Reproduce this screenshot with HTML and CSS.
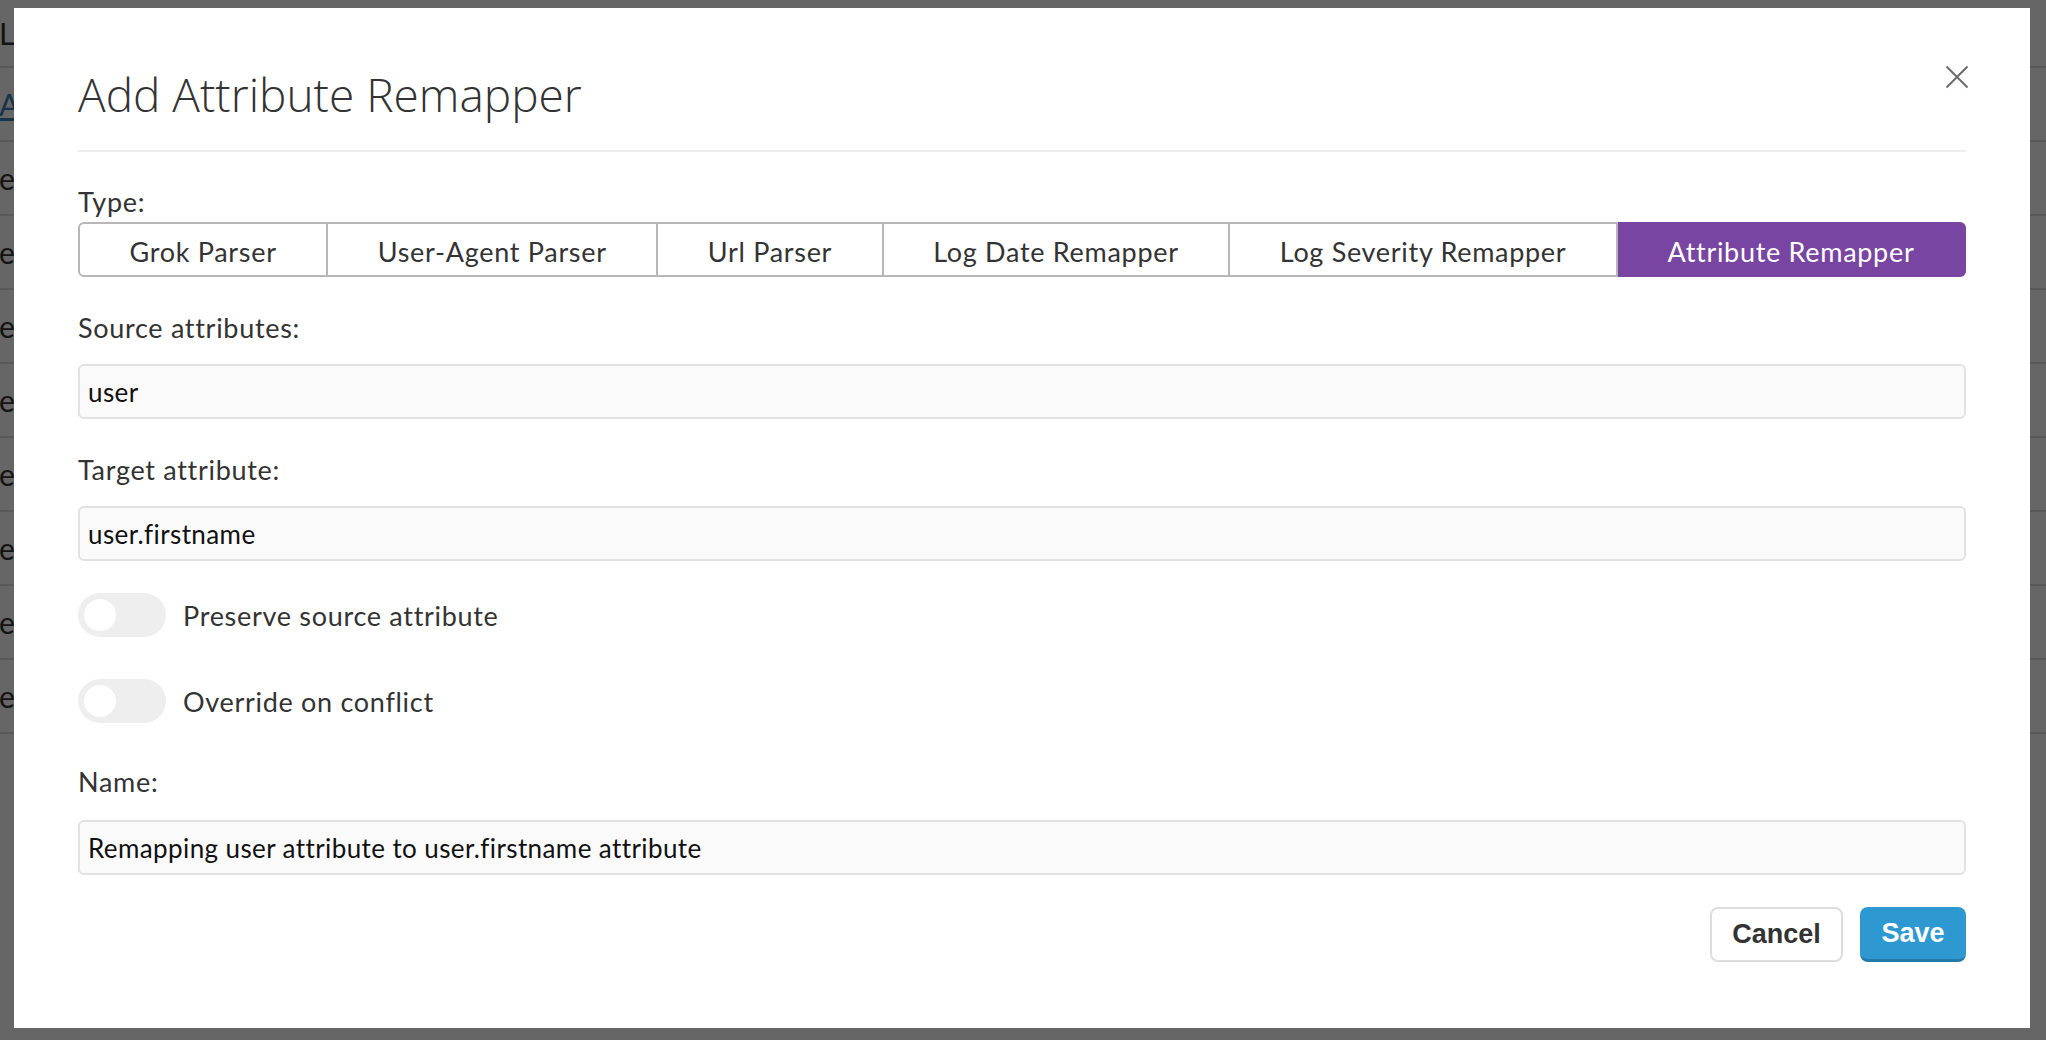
FILE: index.html
```html
<!DOCTYPE html>
<html>
<head>
<meta charset="utf-8">
<link rel="stylesheet" href="styles.css">
</head>
<body>
<div class="page">
  <div class="row row-head"><span class="row-text">Logs</span></div>
  <div class="row"><a class="row-link" href="#">Add</a></div>
  <div class="row"><span class="row-text">e</span></div>
  <div class="row"><span class="row-text">e</span></div>
  <div class="row"><span class="row-text">e</span></div>
  <div class="row"><span class="row-text">e</span></div>
  <div class="row"><span class="row-text">e</span></div>
  <div class="row"><span class="row-text">e</span></div>
  <div class="row"><span class="row-text">e</span></div>
  <div class="row"><span class="row-text">e</span></div>
</div>
<div class="backdrop"></div>
<div class="modal">
  <div class="modal-header">
    <h1 class="modal-title">Add Attribute Remapper</h1>
    <button class="close" aria-label="Close">
      <svg width="24" height="24" viewBox="0 0 24 24"><path d="M1.5 1.5 L22.5 22.5 M22.5 1.5 L1.5 22.5" stroke="#6b6b6b" stroke-width="2" fill="none"/></svg>
    </button>
  </div>
  <div class="modal-body">
    <div class="label label-type">Type:</div>
    <div class="tabs">
      <div class="tab">Grok Parser</div>
      <div class="tab">User-Agent Parser</div>
      <div class="tab">Url Parser</div>
      <div class="tab">Log Date Remapper</div>
      <div class="tab">Log Severity Remapper</div>
      <div class="tab tab-active">Attribute Remapper</div>
    </div>
    <div class="label label-gap">Source attributes:</div>
    <div class="input">user</div>
    <div class="label label-gap">Target attribute:</div>
    <div class="input">user.firstname</div>
    <div class="toggle-row toggle-first">
      <span class="toggle"><span class="knob"></span></span>
      <span class="toggle-text">Preserve source attribute</span>
    </div>
    <div class="toggle-row toggle-second">
      <span class="toggle"><span class="knob"></span></span>
      <span class="toggle-text">Override on conflict</span>
    </div>
    <div class="label label-name">Name:</div>
    <div class="input">Remapping user attribute to user.firstname attribute</div>
    <div class="actions">
      <button class="btn btn-cancel">Cancel</button>
      <button class="btn btn-save">Save</button>
    </div>
  </div>
</div>
</body>
</html>
```
FILE: styles.css
```css
html, body {
  margin: 0;
  padding: 0;
  height: 100%;
  overflow: hidden;
}
body {
  background: #ffffff;
  font-family: Lato, "Liberation Sans", sans-serif;
  position: relative;
}
.page {
  display: flex;
  flex-direction: column;
}
.row {
  height: 72px;
  border-bottom: 2px solid #dedede;
  display: flex;
  align-items: center;
  font-family: Lato, sans-serif;
  font-size: 30px;
  color: #333;
}
.row-head {
  height: 66px;
}
.row-text {
  margin-left: -1px;
}
.row-link {
  color: #3b7fb8;
  text-decoration: underline;
  margin-left: -1px;
}
.backdrop {
  position: absolute;
  inset: 0;
  background: rgba(0, 0, 0, 0.6);
}
.modal {
  position: absolute;
  left: 14px;
  top: 8px;
  width: 2016px;
  height: 1020px;
  box-sizing: border-box;
  background: #fff;
  padding: 0 64px;
}
.modal-header {
  display: flex;
  justify-content: space-between;
  align-items: flex-start;
  padding-top: 58px;
  padding-bottom: 28px;
  border-bottom: 2px solid #eeeeee;
}
.modal-title {
  margin: 0;
  font-family: "Open Sans", sans-serif;
  font-weight: 300;
  font-size: 46px;
  line-height: 56px;
  color: #333;
}
.close {
  border: 0;
  background: none;
  padding: 0;
  margin: -1px -3px 0 0;
  width: 24px;
  height: 24px;
  display: block;
}
.close svg {
  display: block;
}
.modal-body {
  display: flex;
  flex-direction: column;
}
.label {
  font-size: 27px;
  letter-spacing: 0.7px;
  line-height: 36px;
  color: #333;
}
.label-type {
  margin-top: 32px;
  margin-bottom: 2px;
}
.label-gap {
  margin-top: 33px;
  margin-bottom: 18px;
}
.label-name {
  margin-top: 41px;
  margin-bottom: 20px;
}
.tabs {
  display: flex;
  height: 55px;
}
.tab {
  flex: 1 1 auto;
  box-sizing: border-box;
  height: 55px;
  padding: 3px 10px 0;
  border: 2px solid #b7b7b7;
  border-left-width: 0;
  display: flex;
  align-items: center;
  justify-content: center;
  font-size: 27px;
  letter-spacing: 0.7px;
  color: #333;
  white-space: nowrap;
}
.tab:first-child {
  border-left-width: 2px;
  border-radius: 6px 0 0 6px;
}
.tab:last-child {
  border-radius: 0 6px 6px 0;
}
.tab-active {
  background: #7845a2;
  border-color: #7845a2;
  color: #fff;
}
.input {
  box-sizing: border-box;
  height: 55px;
  border: 2px solid #e2e2e2;
  border-radius: 6px;
  background: #fafafa;
  padding: 0 8px;
  display: flex;
  align-items: center;
  font-size: 26px;
  letter-spacing: 0.4px;
  color: #111;
}
.toggle-row {
  display: flex;
  align-items: center;
  gap: 17px;
  height: 44px;
}
.toggle-first {
  margin-top: 32px;
}
.toggle-second {
  margin-top: 42px;
}
.toggle {
  width: 88px;
  height: 44px;
  border-radius: 22px;
  background: #eeeeee;
  display: flex;
  align-items: center;
  padding-left: 6px;
  box-sizing: border-box;
}
.knob {
  width: 32px;
  height: 32px;
  border-radius: 50%;
  background: #fff;
}
.toggle-text {
  font-size: 27px;
  letter-spacing: 0.7px;
  color: #333;
}
.actions {
  display: flex;
  justify-content: flex-end;
  gap: 17px;
  margin-top: 32px;
}
.btn {
  box-sizing: border-box;
  height: 55px;
  border-radius: 8px;
  font-family: "Liberation Sans", Arial, sans-serif;
  font-weight: bold;
  font-size: 27px;
  padding: 0;
}
.btn-cancel {
  width: 133px;
  background: #fff;
  border: 2px solid #dddddd;
  color: #333;
}
.btn-save {
  width: 106px;
  background: #2e98d1;
  border: 0;
  border-bottom: 3px solid #2579a8;
  color: #fff;
}
```
